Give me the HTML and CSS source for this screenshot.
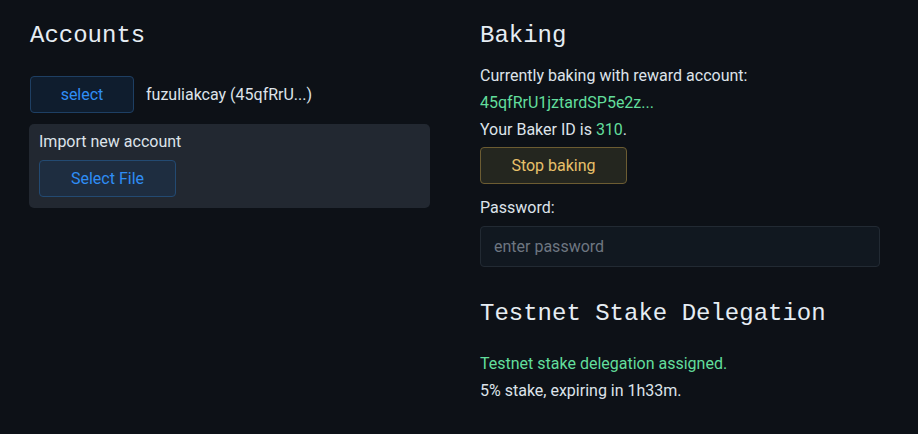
FILE: index.html
```html
<!DOCTYPE html>
<html>
<head>
<meta charset="utf-8">
<link rel="stylesheet" href="styles.css">
</head>
<body>
<div class="page">
  <section class="col">
    <h2 class="title">Accounts</h2>
    <div class="acct-row">
      <button class="btn btn-blue btn-select">select</button>
      <span class="acct-name">fuzuliakcay (45qfRrU...)</span>
    </div>
    <div class="card">
      <div class="card-label">Import new account</div>
      <button class="btn btn-blue btn-file">Select File</button>
    </div>
  </section>
  <section class="col">
    <h2 class="title">Baking</h2>
    <p class="line">Currently baking with reward account:</p>
    <p class="line green">45qfRrU1jztardSP5e2z...</p>
    <p class="line">Your Baker ID is <span class="green">310</span>.</p>
    <button class="btn btn-gold">Stop baking</button>
    <label class="line pw-label">Password:</label>
    <input class="pw" type="password" placeholder="enter password">
    <h2 class="title title2">Testnet Stake Delegation</h2>
    <p class="line green">Testnet stake delegation assigned.</p>
    <p class="line">5% stake, expiring in 1h33m.</p>
  </section>
</div>
</body>
</html>
```
FILE: styles.css
```css
html, body {
  margin: 0;
  padding: 0;
  background: #0d1117;
  color: #dde3ea;
  font-family: Roboto, "Noto Sans", sans-serif;
  font-size: 16px;
}
.page {
  display: grid;
  grid-template-columns: 400px 400px;
  column-gap: 50px;
  padding: 21px 30px 0 30px;
}
.col {
  display: flex;
  flex-direction: column;
  align-items: flex-start;
}
.title {
  margin: 0;
  font-family: "Liberation Mono", "DejaVu Sans Mono", monospace;
  font-weight: normal;
  font-size: 24px;
  line-height: 30px;
  color: #e6edf3;
}
.acct-row {
  display: flex;
  align-items: center;
  gap: 12px;
  margin-top: 25px;
}
.btn {
  font-family: Roboto, "Noto Sans", sans-serif;
  font-size: 16px;
  height: 37px;
  border-radius: 4px;
  padding: 0;
  cursor: pointer;
}
.btn-blue {
  background: #0f1d2e;
  border: 1px solid #1e3f63;
  color: #2f8df5;
}
.btn-select {
  width: 104px;
}
.acct-name {
  color: #dde3ea;
}
.card {
  align-self: stretch;
  margin-top: 11px;
  margin-left: -1px;
  background: #222831;
  border-radius: 5px;
  padding: 6px 10px 11px 10px;
  display: flex;
  flex-direction: column;
  align-items: flex-start;
}
.card-label {
  line-height: 24px;
  margin-bottom: 6px;
}
.card .btn-file {
  width: 137px;
  background: #1e2d40;
  border-color: #234a72;
}
.line {
  margin: 0;
  line-height: 27px;
}
.title + .line {
  margin-top: 11px;
}
.green {
  color: #62de9c;
}
.btn-gold {
  margin-top: 4px;
  width: 147px;
  background: #24261f;
  border: 1px solid #6c5c32;
  color: #e8c06a;
}
.pw-label {
  margin-top: 10px;
}
.pw {
  margin-top: 5px;
  box-sizing: border-box;
  width: 400px;
  height: 41px;
  background: #111820;
  border: 1px solid #222a33;
  border-radius: 4px;
  padding: 0 13px;
  font-family: Roboto, "Noto Sans", sans-serif;
  font-size: 16px;
  color: #e6edf3;
  outline: none;
}
.pw::placeholder {
  color: #6e7681;
}
.title2 {
  margin-top: 32px;
}
.title2 + .line {
  margin-top: 21px;
}
```
